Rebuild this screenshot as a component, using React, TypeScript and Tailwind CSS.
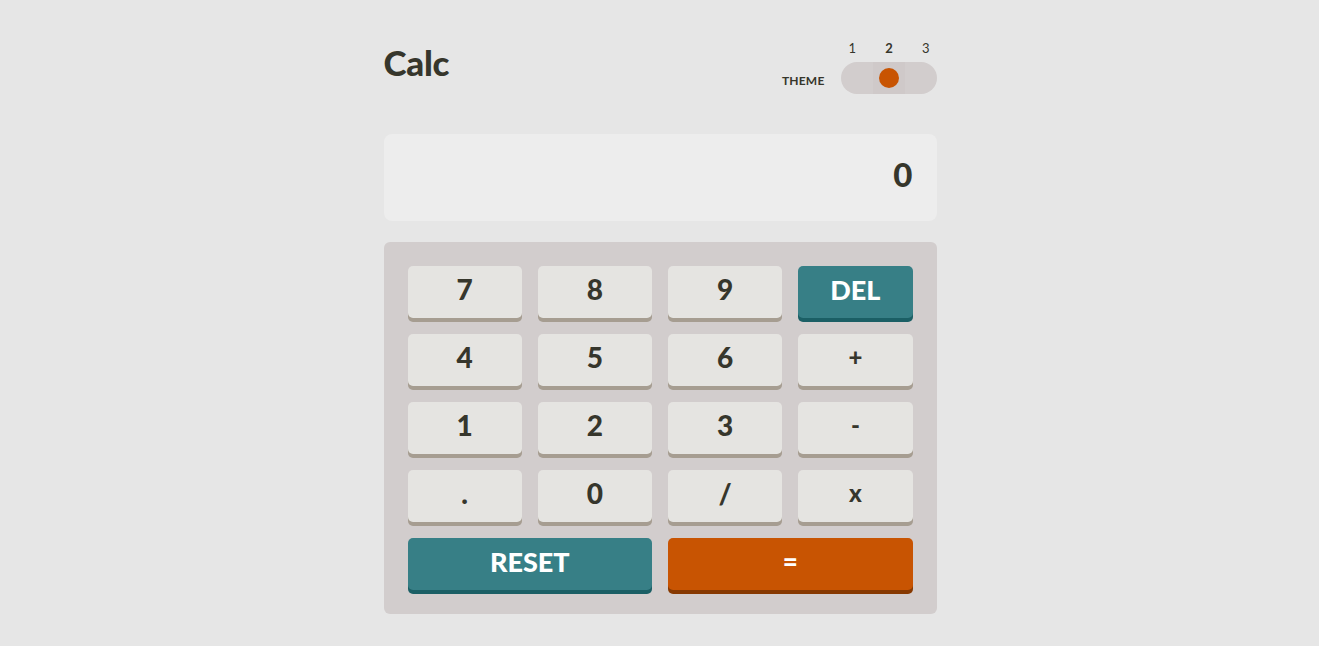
import React from 'react'

type Key = { label: string; kind?: 'num' | 'util' | 'eq'; span?: boolean; small?: boolean }

const keys: Key[] = [
  { label: '7' }, { label: '8' }, { label: '9' }, { label: 'DEL', kind: 'util' },
  { label: '4' }, { label: '5' }, { label: '6' }, { label: '+', small: true },
  { label: '1' }, { label: '2' }, { label: '3' }, { label: '-', small: true },
  { label: '.' }, { label: '0' }, { label: '/' }, { label: 'x', small: true },
  { label: 'RESET', kind: 'util', span: true }, { label: '=', kind: 'eq', span: true },
]

const keyStyle = {
  num:  'bg-[#e5e4e1] shadow-[0_4px_0_#a69d91] text-[#36362c] text-[28px]',
  util: 'bg-[#377f86] shadow-[0_4px_0_#1b5f65] text-white text-[27px]',
  eq:   'bg-[#c85402] shadow-[0_4px_0_#873901] text-white text-[26px]',
}

export default function App() {
  return (
    <div className="flex min-h-[646px] w-full justify-center bg-[#e6e6e6] pl-[1px] font-['Lato',sans-serif] text-[#36362c]">
      <div className="w-[553px] pt-[40px]">
        <header className="flex items-start justify-between">
          <h1 className="text-[35px] font-black leading-[44px] tracking-[-0.3px]">Calc</h1>
          <div className="flex items-end gap-[16px]">
            <span className="mb-[4px] text-[12px] font-bold tracking-[0.2px]">THEME</span>
            <div className="flex flex-col">
              <div className="flex justify-between pl-[8px] pr-[7px] text-[13px] leading-[16px]">
                <span>1</span>
                <span className="font-bold">2</span>
                <span>3</span>
              </div>
              <div className="mt-[6px] flex h-[32px] w-[96px] items-center rounded-full bg-[#d2cdcd]">
                <div className="h-full w-[32px]" />
                <div className="flex h-full w-[32px] items-center justify-center bg-[#cfc9c9]">
                  <div className="h-[20px] w-[20px] rounded-full bg-[#c85402]" />
                </div>
              </div>
            </div>
          </div>
        </header>

        <div className="mt-[40px] flex h-[87px] items-center justify-end rounded-[8px] bg-[#ededed] pb-[6px] pl-[25px] pr-[24px]">
          <span className="text-[33px] font-black">0</span>
        </div>

        <div className="mt-[21px] grid grid-cols-4 gap-[16px] rounded-[6px] bg-[#d2cdcd] p-[24px]">
          {keys.map(k => (
            <button
              key={k.label}
              className={`flex h-[52px] items-center justify-center rounded-[5px] pb-[6px] font-black leading-none ${keyStyle[k.kind ?? 'num']} ${k.span ? 'col-span-2' : ''} ${k.small ? '!text-[24px]' : ''}`}
            >
              {k.label}
            </button>
          ))}
        </div>
      </div>
    </div>
  )
}
